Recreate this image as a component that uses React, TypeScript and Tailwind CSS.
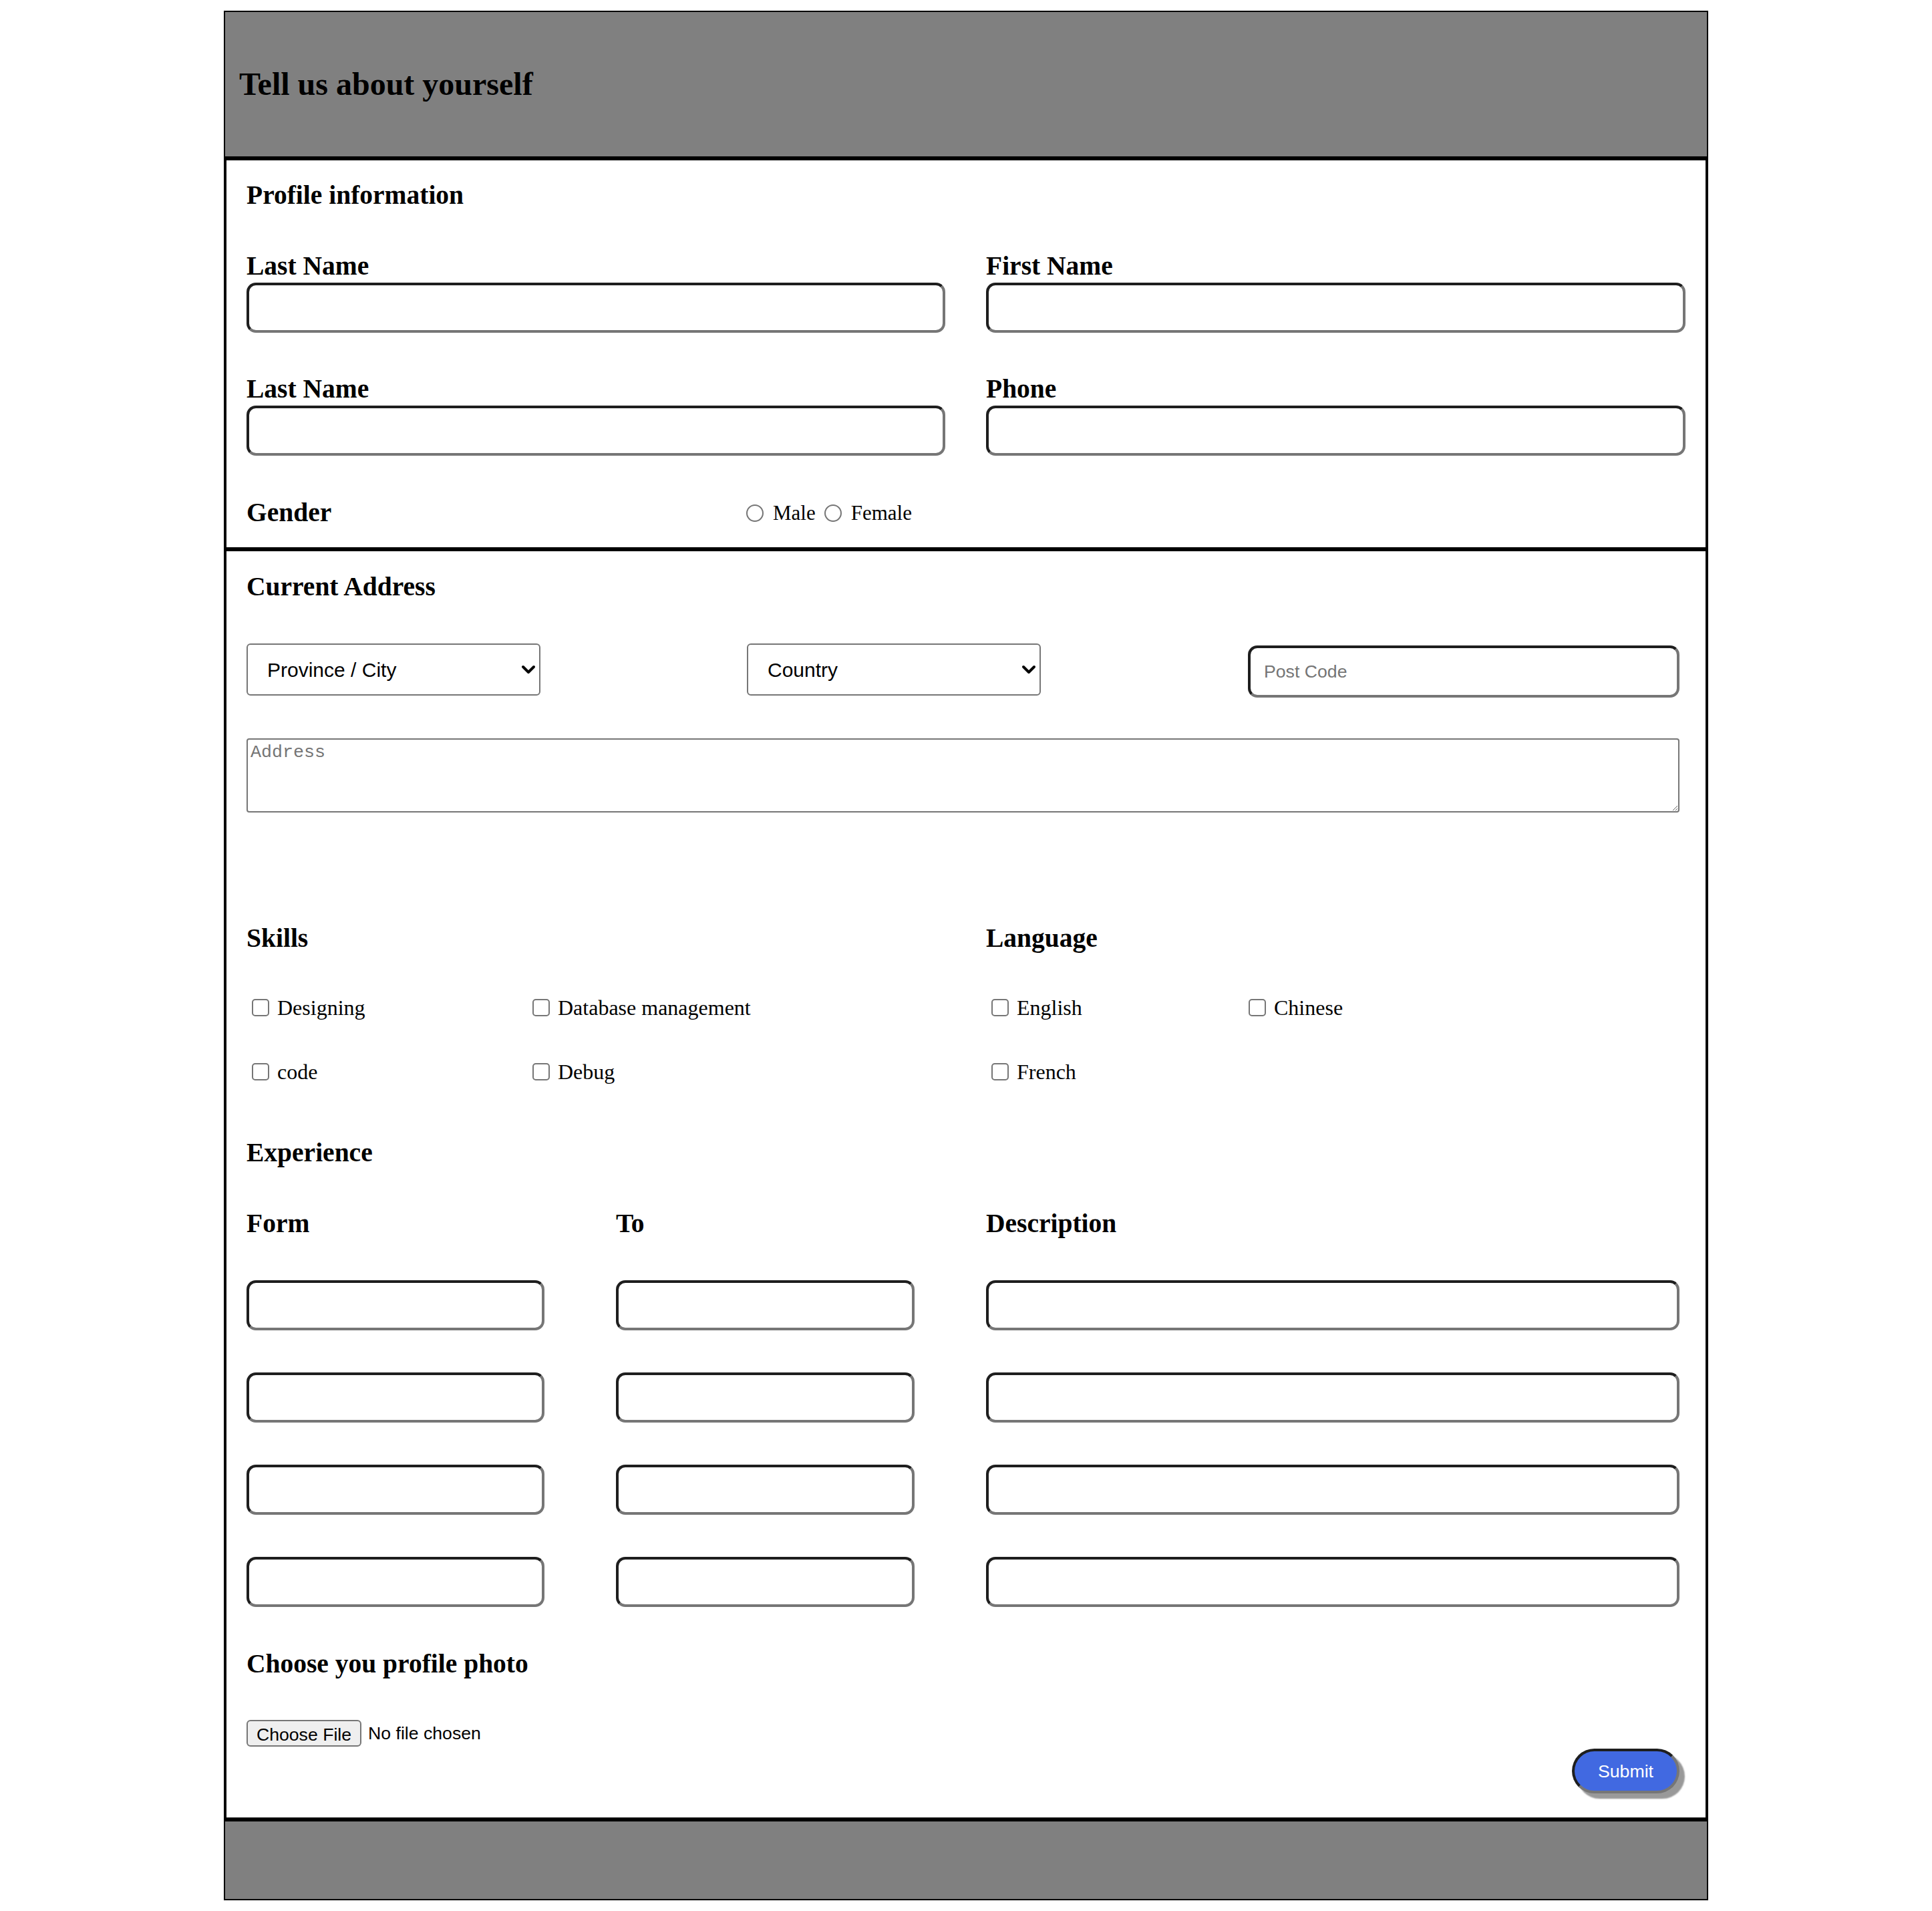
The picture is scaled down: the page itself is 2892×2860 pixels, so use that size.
import React from 'react';

const serif = "font-['Liberation_Serif','Times_New_Roman',serif]";
const sans = "font-['Liberation_Sans',Arial,sans-serif]";

// big rounded text boxes with the inset look
const boxInput =
  'block h-[75px] border-[4px] border-solid border-t-[#1e1e1e] border-l-[#1e1e1e] border-b-[#767676] border-r-[#767676] rounded-[14px] bg-white outline-none';

const Heading: React.FC<{ children: React.ReactNode; className?: string }> = ({ children, className = '' }) => (
  <h3 className={`${serif} text-[39.5px] leading-[43px] font-bold text-black ${className}`}>{children}</h3>
);

const Check: React.FC<{ label: string }> = ({ label }) => (
  <label className="flex items-center h-[43px]">
    <input
      type="checkbox"
      className="appearance-none w-[26px] h-[26px] ml-[8px] mr-[12px] border-2 border-solid border-[#767676] rounded-[5px] bg-white"
    />
    <span className={`${serif} text-[32px] text-black`}>{label}</span>
  </label>
);

const Radio: React.FC<{ label: string }> = ({ label }) => (
  <label className="flex items-center">
    <input
      type="radio"
      name="gender"
      className="appearance-none w-[26px] h-[26px] ml-[10px] mr-[14px] border-2 border-solid border-[#767676] rounded-full bg-white"
    />
    <span className={`${serif} text-[31px] leading-[43px] text-black`}>{label}</span>
  </label>
);

const Select: React.FC<{ label: string }> = ({ label }) => (
  <div className="relative w-[440px] h-[78px]">
    <select
      className={`${sans} appearance-none w-full h-full pl-[29px] text-[30px] text-black bg-white border-2 border-solid border-[#767676] rounded-[6px]`}
      defaultValue=""
    >
      <option value="">{label}</option>
    </select>
    <svg
      className="absolute right-[7px] top-[32px] pointer-events-none"
      width="22"
      height="14"
      viewBox="0 0 22 14"
      fill="none"
    >
      <path d="M3 3 L11 11 L19 3" stroke="#000" strokeWidth="4" strokeLinecap="round" strokeLinejoin="round" />
    </svg>
  </div>
);

const expRows = [0, 1, 2, 3];

export default function App() {
  return (
    <div className="min-h-screen bg-white pt-[16px]">
      <div className="mx-auto w-[2222px] border-2 border-solid border-black">
        {/* Header */}
        <header className="h-[216px] bg-[#808080] flex items-center pl-[21px]">
          <h2 className={`${serif} text-[48px] font-bold text-black`}>Tell us about yourself</h2>
        </header>

        <div className="border-x-[2px] border-solid border-black">
          {/* Profile information */}
          <section className="border-t-[6px] border-solid border-black px-[30px] pt-[31px] pb-[30px]">
            <Heading>Profile information</Heading>
            <div className="mt-[63px] grid grid-cols-[1046px_1047px] gap-x-[61px] gap-y-[63px]">
              <div>
                <Heading className="mb-[3px]">Last Name</Heading>
                <input className={`${boxInput} w-full`} />
              </div>
              <div>
                <Heading className="mb-[3px]">First Name</Heading>
                <input className={`${boxInput} w-full`} />
              </div>
              <div>
                <Heading className="mb-[3px]">Last Name</Heading>
                <input className={`${boxInput} w-full`} />
              </div>
              <div>
                <Heading className="mb-[3px]">Phone</Heading>
                <input className={`${boxInput} w-full`} />
              </div>
            </div>
            <div className="mt-[64px] flex items-center">
              <Heading className="w-[738px]">Gender</Heading>
              <Radio label="Male" />
              <div className="w-[3px]" />
              <Radio label="Female" />
            </div>
          </section>

          {/* Address, skills, experience, photo */}
          <section className="border-t-[6px] border-solid border-black px-[30px] pt-[32px] pb-[36px]">
            <Heading>Current Address</Heading>
            <div className="mt-[63px] grid grid-cols-[749px_750px_646px]">
              <Select label="Province / City" />
              <Select label="Country" />
              <input
                placeholder="Post Code"
                className={`${boxInput} ${sans} mt-[3px] h-[78px] w-[646px] pl-[20px] text-[26.67px] placeholder:text-[#757575]`}
              />
            </div>
            <textarea
              placeholder="Address"
              className="block mt-[61px] w-[2145px] h-[111px] p-[4px] border-2 border-solid border-[#767676] rounded-[4px] font-['Liberation_Mono','Courier_New',monospace] text-[26.67px] leading-[30px] placeholder:text-[#757575]"
            />

            <div className="mt-[167px] grid grid-cols-[1107px_1038px]">
              <div>
                <Heading>Skills</Heading>
                <div className="mt-[60px] grid grid-cols-[420px_400px] gap-y-[53px]">
                  <Check label="Designing" />
                  <Check label="Database management" />
                  <Check label="code" />
                  <Check label="Debug" />
                </div>
              </div>
              <div>
                <Heading>Language</Heading>
                <div className="mt-[60px] grid grid-cols-[385px_400px] gap-y-[53px]">
                  <Check label="English" />
                  <Check label="Chinese" />
                  <Check label="French" />
                </div>
              </div>
            </div>

            <Heading className="mt-[79px]">Experience</Heading>
            <div className="mt-[63px] grid grid-cols-[553px_554px_1038px]">
              <Heading>Form</Heading>
              <Heading>To</Heading>
              <Heading>Description</Heading>
            </div>
            <div className="mt-[63px] flex flex-col gap-[63px]">
              {expRows.map((r) => (
                <div key={r} className="grid grid-cols-[553px_554px_1038px]">
                  <input className={`${boxInput} w-[446px]`} />
                  <input className={`${boxInput} w-[447px]`} />
                  <input className={`${boxInput} w-[1038px]`} />
                </div>
              ))}
            </div>

            <Heading className="mt-[64px]">Choose you profile photo</Heading>
            <div className={`${sans} mt-[62px] flex items-center text-[26.67px] text-black`}>
              <button className="h-[40px] w-[172px] bg-[#efefef] border-2 border-solid border-[#767676] rounded-[6px] text-[26.67px]">
                Choose File
              </button>
              <span className="ml-[10px]">No file chosen</span>
            </div>
            <div className="flex justify-end w-[2145px] mt-[3px]">
              <button
                className={`${sans} h-[67px] w-[161px] rounded-full bg-[#4169e1] text-white text-[26.67px] border-[4px] border-solid border-t-[#1e1e1e] border-l-[#1e1e1e] border-b-[#767676] border-r-[#767676] shadow-[8px_8px_2px_#999]`}
              >
                Submit
              </button>
            </div>
          </section>
        </div>

        {/* Footer */}
        <footer className="h-[122px] bg-[#808080] border-t-[6px] border-solid border-black" />
      </div>
    </div>
  );
}
